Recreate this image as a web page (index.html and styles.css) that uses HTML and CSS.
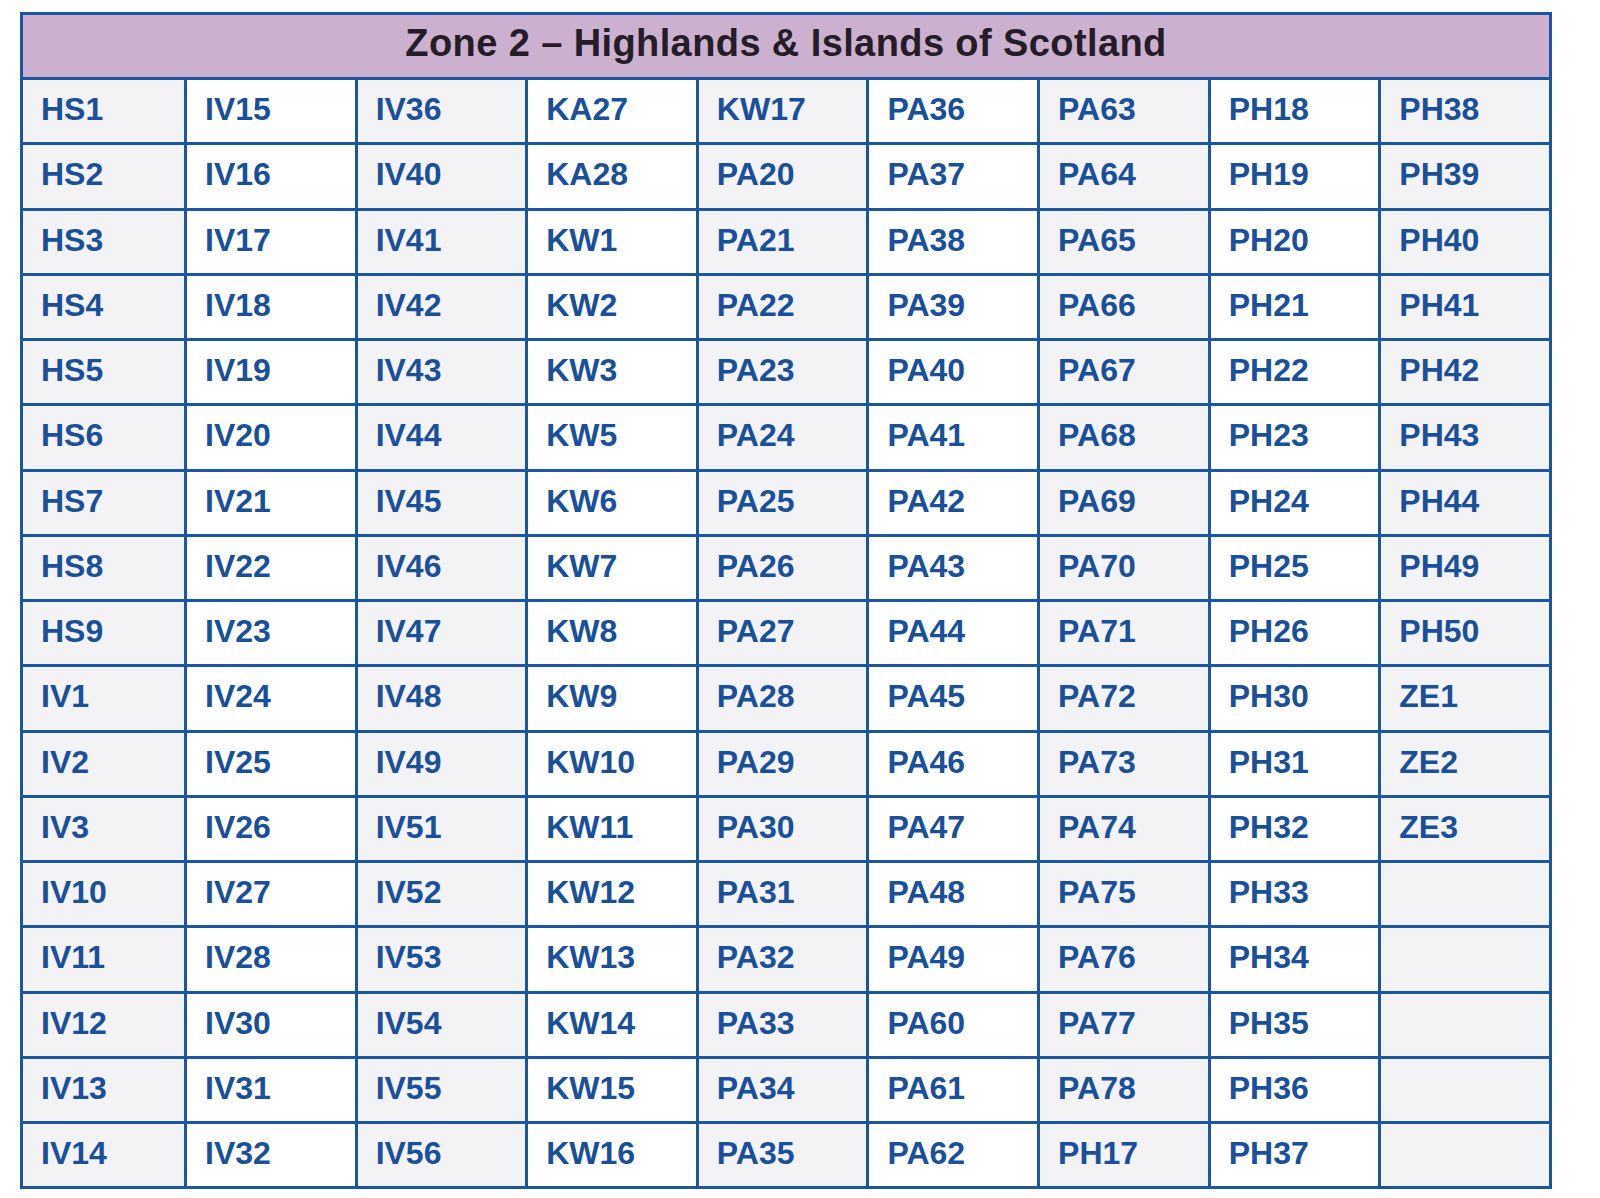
FILE: index.html
```html
<!DOCTYPE html>
<html lang="en">
<head>
<meta charset="utf-8">
<title>Zone 2 – Highlands &amp; Islands of Scotland</title>
<link rel="stylesheet" href="styles.css">
</head>
<body>
<table class="zone-table">
  <colgroup>
    <col class="col-first">
    <col class="col"><col class="col"><col class="col"><col class="col">
    <col class="col"><col class="col"><col class="col"><col class="col">
  </colgroup>
  <thead>
    <tr><th class="zone-title" colspan="9">Zone 2 – Highlands &amp; Islands of Scotland</th></tr>
  </thead>
  <tbody>
    <tr><td>HS1</td><td>IV15</td><td>IV36</td><td>KA27</td><td>KW17</td><td>PA36</td><td>PA63</td><td>PH18</td><td>PH38</td></tr>
    <tr><td>HS2</td><td>IV16</td><td>IV40</td><td>KA28</td><td>PA20</td><td>PA37</td><td>PA64</td><td>PH19</td><td>PH39</td></tr>
    <tr><td>HS3</td><td>IV17</td><td>IV41</td><td>KW1</td><td>PA21</td><td>PA38</td><td>PA65</td><td>PH20</td><td>PH40</td></tr>
    <tr><td>HS4</td><td>IV18</td><td>IV42</td><td>KW2</td><td>PA22</td><td>PA39</td><td>PA66</td><td>PH21</td><td>PH41</td></tr>
    <tr><td>HS5</td><td>IV19</td><td>IV43</td><td>KW3</td><td>PA23</td><td>PA40</td><td>PA67</td><td>PH22</td><td>PH42</td></tr>
    <tr><td>HS6</td><td>IV20</td><td>IV44</td><td>KW5</td><td>PA24</td><td>PA41</td><td>PA68</td><td>PH23</td><td>PH43</td></tr>
    <tr><td>HS7</td><td>IV21</td><td>IV45</td><td>KW6</td><td>PA25</td><td>PA42</td><td>PA69</td><td>PH24</td><td>PH44</td></tr>
    <tr><td>HS8</td><td>IV22</td><td>IV46</td><td>KW7</td><td>PA26</td><td>PA43</td><td>PA70</td><td>PH25</td><td>PH49</td></tr>
    <tr><td>HS9</td><td>IV23</td><td>IV47</td><td>KW8</td><td>PA27</td><td>PA44</td><td>PA71</td><td>PH26</td><td>PH50</td></tr>
    <tr><td>IV1</td><td>IV24</td><td>IV48</td><td>KW9</td><td>PA28</td><td>PA45</td><td>PA72</td><td>PH30</td><td>ZE1</td></tr>
    <tr><td>IV2</td><td>IV25</td><td>IV49</td><td>KW10</td><td>PA29</td><td>PA46</td><td>PA73</td><td>PH31</td><td>ZE2</td></tr>
    <tr><td>IV3</td><td>IV26</td><td>IV51</td><td>KW11</td><td>PA30</td><td>PA47</td><td>PA74</td><td>PH32</td><td>ZE3</td></tr>
    <tr><td>IV10</td><td>IV27</td><td>IV52</td><td>KW12</td><td>PA31</td><td>PA48</td><td>PA75</td><td>PH33</td><td></td></tr>
    <tr><td>IV11</td><td>IV28</td><td>IV53</td><td>KW13</td><td>PA32</td><td>PA49</td><td>PA76</td><td>PH34</td><td></td></tr>
    <tr><td>IV12</td><td>IV30</td><td>IV54</td><td>KW14</td><td>PA33</td><td>PA60</td><td>PA77</td><td>PH35</td><td></td></tr>
    <tr><td>IV13</td><td>IV31</td><td>IV55</td><td>KW15</td><td>PA34</td><td>PA61</td><td>PA78</td><td>PH36</td><td></td></tr>
    <tr><td>IV14</td><td>IV32</td><td>IV56</td><td>KW16</td><td>PA35</td><td>PA62</td><td>PH17</td><td>PH37</td><td></td></tr>
  </tbody>
</table>
</body>
</html>
```
FILE: styles.css
```css
html, body {
  margin: 0;
  padding: 0;
  background: #ffffff;
}

body {
  padding: 12px 0 0 20px;
  font-family: "Liberation Sans", Arial, Helvetica, sans-serif;
}

.zone-table {
  border-collapse: collapse;
  table-layout: fixed;
  width: 1532px;
  border: 3px solid #1c55a0;
}

.col-first {
  width: 164px;
}

.col {
  width: 170.6px;
}

.zone-title {
  height: 65px;
  box-sizing: border-box;
  padding: 0 0 7px 0;
  background: #cbb0cf;
  color: #261c27;
  font-size: 38px;
  font-weight: bold;
  letter-spacing: 0.4px;
  text-align: center;
  vertical-align: middle;
  border: 3px solid #1c55a0;
  line-height: 1;
}

.zone-table td {
  height: 65.25px;
  box-sizing: border-box;
  padding: 0 0 4px 18px;
  border: 3px solid #1c55a0;
  color: #1a4f99;
  font-size: 32px;
  font-weight: bold;
  line-height: 1;
  vertical-align: middle;
  background: #ffffff;
}

.zone-table td:nth-child(odd) {
  background: #f3f2f5;
}
```
